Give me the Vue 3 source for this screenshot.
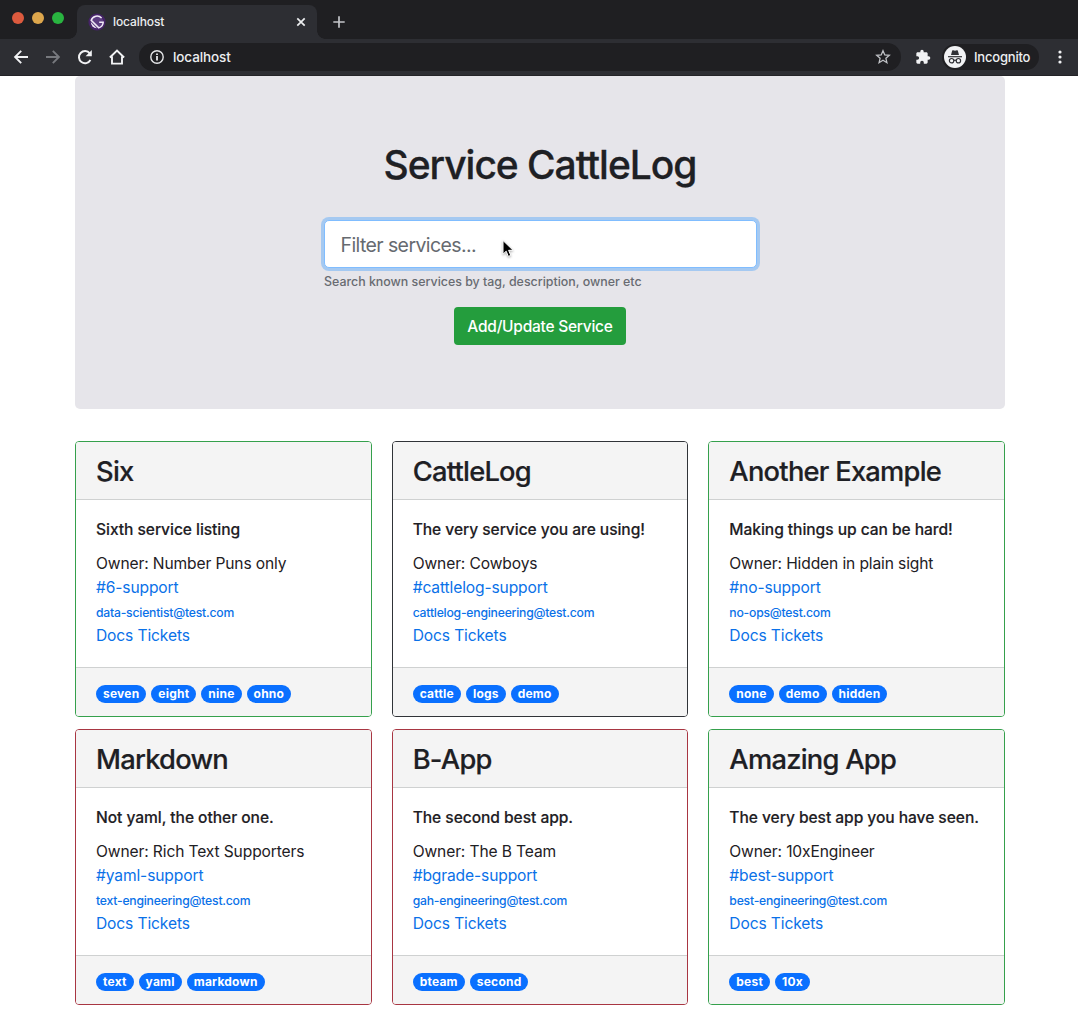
<script setup>
const services = [
  { name: 'Six', about: 'Sixth service listing', owner: 'Number Puns only', chat: '#6-support', email: 'data-scientist@test.com', tags: ['seven', 'eight', 'nine', 'ohno'], tone: 'green' },
  { name: 'CattleLog', about: 'The very service you are using!', owner: 'Cowboys', chat: '#cattlelog-support', email: 'cattlelog-engineering@test.com', tags: ['cattle', 'logs', 'demo'], tone: 'dark' },
  { name: 'Another Example', about: 'Making things up can be hard!', owner: 'Hidden in plain sight', chat: '#no-support', email: 'no-ops@test.com', tags: ['none', 'demo', 'hidden'], tone: 'green' },
  { name: 'Markdown', about: 'Not yaml, the other one.', owner: 'Rich Text Supporters', chat: '#yaml-support', email: 'text-engineering@test.com', tags: ['text', 'yaml', 'markdown'], tone: 'red' },
  { name: 'B-App', about: 'The second best app.', owner: 'The B Team', chat: '#bgrade-support', email: 'gah-engineering@test.com', tags: ['bteam', 'second'], tone: 'red' },
  { name: 'Amazing App', about: 'The very best app you have seen.', owner: '10xEngineer', chat: '#best-support', email: 'best-engineering@test.com', tags: ['best', '10x'], tone: 'green' },
]
</script>

<template>
  <div class="window">
    <header class="tabstrip">
      <div class="lights"><i class="close"></i><i class="min"></i><i class="max"></i></div>
      <div class="tab">
        <svg class="favicon" width="18" height="18" viewBox="0 0 18 18">
          <circle cx="9" cy="9" r="8.6" fill="#452367" />
          <circle cx="9" cy="9" r="6.3" fill="#5c3d80" />
          <path d="M13.6 5.1A6.2 6.2 0 0 0 3.2 7.2L10.8 14.9A6.2 6.2 0 0 0 15.2 9.3H11.2" fill="none" stroke="#efe9f5" stroke-width="1.5" />
          <path d="M2.8 9.3A6.2 6.2 0 0 0 8.7 15.2Z" fill="#efe9f5" />
        </svg>
        <span class="tab-title">localhost</span>
        <svg class="tab-close" width="10" height="10" viewBox="0 0 10 10"><path d="M1.3 1.3l7.4 7.4M8.7 1.3L1.3 8.7" stroke="#eceef0" stroke-width="1.7" /></svg>
      </div>
      <svg class="new-tab" width="12" height="12" viewBox="0 0 12 12"><path d="M6 .3v11.4M.3 6h11.4" stroke="#c3c5c9" stroke-width="1.7" /></svg>
    </header>

    <nav class="toolbar">
      <svg class="nav-icon" width="16" height="16" viewBox="0 0 16 16" fill="none" stroke="#f1f2f4" stroke-width="1.9"><path d="M15 8H2.4M8.2 1.9L2.1 8l6.1 6.1" /></svg>
      <svg class="nav-icon" width="16" height="16" viewBox="0 0 16 16" fill="none" stroke="#77797e" stroke-width="1.9"><path d="M1 8h12.6M7.8 1.9L13.9 8l-6.1 6.1" /></svg>
      <svg class="nav-icon" width="16" height="16" viewBox="0 0 16 16"><path d="M13.4 11.1A6.1 6.1 0 1 1 12.8 4.3" fill="none" stroke="#f1f2f4" stroke-width="2" /><path d="M14.8 1v6.2H8.6z" fill="#f1f2f4" /></svg>
      <svg class="nav-icon" width="16" height="16" viewBox="0 0 16 16"><path d="M.9 8.5L8 1.5l7.1 7M3 7.4v7.2h10V7.4" fill="none" stroke="#f1f2f4" stroke-width="1.9" /></svg>
      <div class="address">
        <svg width="14" height="14" viewBox="0 0 14 14"><circle cx="7" cy="7" r="6.2" fill="none" stroke="#e6e7e9" stroke-width="1.4" /><path d="M7 6.1v4.3M7 3.4v1.6" stroke="#e6e7e9" stroke-width="1.8" /></svg>
        <span class="url">localhost</span>
        <svg class="star" width="16" height="16" viewBox="0 0 16 16"><path d="M8 1.7l1.8 4.2 4.5.4-3.4 3 1 4.4L8 11.3l-3.9 2.4 1-4.4-3.4-3 4.5-.4z" fill="none" stroke="#c0c2c6" stroke-width="1.3" stroke-linejoin="miter" /></svg>
      </div>
      <svg class="puzzle" width="16" height="16" viewBox="0 0 24 24"><path fill="#f1f2f4" d="M20.5 11H19V7c0-1.100-.9-2-2-2h-4V3.500a2.500 2.500 0 0 0-5 0V5H4c-1.100 0-2 .9-2 2v3.800h1.500a2.700 2.700 0 0 1 0 5.400H2V20c0 1.100.9 2 2 2h3.800v-1.500a2.700 2.700 0 0 1 5.400 0V22H17c1.100 0 2-.9 2-2v-4h1.500a2.500 2.500 0 0 0 0-5z" /></svg>
      <div class="incognito">
        <svg width="22" height="22" viewBox="0 0 22 22">
          <circle cx="11" cy="11" r="11" fill="#f1f2f4" />
          <path d="M7 8.900L8.200 4.600Q8.500 4 9.200 4.200L11 4.700l1.800-.5q.7-.2 1 .4L15 8.900z" fill="#303136" />
          <path d="M4 10.700h14" stroke="#303136" stroke-width="1.200" />
          <g fill="none" stroke="#303136" stroke-width="1.200"><circle cx="7.600" cy="14.700" r="2.200" /><circle cx="14.400" cy="14.700" r="2.200" /><path d="M9.800 14.500q1.200-.8 2.400 0" /></g>
        </svg>
        <span>Incognito</span>
      </div>
      <svg class="menu" width="4" height="14" viewBox="0 0 4 14" fill="#f1f2f4"><circle cx="2" cy="2" r="1.600" /><circle cx="2" cy="7" r="1.600" /><circle cx="2" cy="12" r="1.600" /></svg>
    </nav>

    <main class="page">
      <section class="hero">
        <h1>Service CattleLog</h1>
        <div class="filter">
          <div class="field">
            <input type="text" placeholder="Filter services..." />
            <svg class="pointer" width="14" height="20" viewBox="0 0 14 20"><path d="M2 1.500v13.700l3.200-3 2.100 5.200 2.500-1-2.200-5.100h4.500z" fill="#000" stroke="#fff" stroke-width="1" /></svg>
          </div>
          <small>Search known services by tag, description, owner etc</small>
        </div>
        <button type="button">Add/Update Service</button>
      </section>

      <section class="cards">
        <article v-for="s in services" :key="s.name" class="card" :class="s.tone">
          <header class="card-head"><h2>{{ s.name }}</h2></header>
          <div class="card-body">
            <h3>{{ s.about }}</h3>
            <p>Owner: {{ s.owner }}</p>
            <p><a>{{ s.chat }}</a></p>
            <p class="email"><a>{{ s.email }}</a></p>
            <p><a>Docs</a> <a>Tickets</a></p>
          </div>
          <footer class="card-foot"><span v-for="t in s.tags" :key="t" class="tag">{{ t }}</span></footer>
        </article>
      </section>
    </main>
  </div>
</template>

<style>
body { margin: 0; background: #fff; }
</style>

<style scoped>
* { box-sizing: border-box; }
svg { display: block; flex: none; }
.window { height: 1020px; overflow: hidden; font-family: Inter, "Liberation Sans", sans-serif; color: #1e2024; }

.tabstrip { display: flex; height: 39px; background: #1f1f22; }
.lights { display: flex; gap: 8px; padding: 12px 0 0 12px; width: 77px; }
.lights i { width: 12px; height: 12px; border-radius: 50%; }
.close { background: #dc5a3e; }
.min { background: #dda64c; }
.max { background: #29b440; }
.tab { position: relative; display: flex; align-items: center; width: 240px; height: 34px; margin-top: 5px; padding: 0 11px; border-radius: 8px 8px 0 0; background: #2d2e33; }
.tab::before, .tab::after { content: ""; position: absolute; bottom: 0; width: 8px; height: 8px; }
.tab::before { left: -8px; background: radial-gradient(circle at 0 0, transparent 7.5px, #2d2e33 8px); }
.tab::after { right: -8px; background: radial-gradient(circle at 100% 0, transparent 7.5px, #2d2e33 8px); }
.tab-title { margin-left: 7px; padding-bottom: 2px; font-size: 12px; font-weight: 500; color: #eceef0; letter-spacing: -0.1px; }
.tab-close { margin-left: auto; }
.new-tab { margin: 16px 0 0 16px; }

.toolbar { display: flex; align-items: center; height: 37px; padding: 0 16px 0 13px; background: #2d2e33; border-bottom: 1px solid #232327; }
.nav-icon { margin-right: 16px; }
.address { display: flex; align-items: center; width: 762px; height: 28px; margin-left: -2px; padding: 0 10px 0 11px; border-radius: 14px; background: #1f1f22; }
.url { margin-left: 9px; font-size: 13.5px; font-weight: 500; color: #eceef0; letter-spacing: -0.1px; }
.star { margin-left: auto; }
.puzzle { margin-left: 14px; }
.incognito { display: flex; align-items: center; width: 97px; height: 26px; margin-left: 11px; padding-left: 2px; border-radius: 13px; background: #1f1f22; font-size: 13px; font-weight: 500; color: #eceef0; letter-spacing: -0.2px; }
.incognito span { margin-left: 8px; }
.menu { margin-left: auto; }

.page { width: 930px; margin: 0 auto 0 75px; }
.hero { display: flex; flex-direction: column; align-items: center; height: 333px; padding-top: 65px; border-radius: 5px; background: #e6e5ea; }
h1 { margin: 0; font-size: 39px; line-height: 48px; font-weight: 500; letter-spacing: -1.05px; -webkit-text-stroke: 0.3px; }
.filter { display: flex; flex-direction: column; width: 433px; margin: 31px 0 0 1px; }
.field { position: relative; }
input { display: block; width: 433px; height: 48px; padding: 2px 15.500px 0; border: 1px solid #80bdff; border-radius: 5px; outline: 0; background: #fff; box-shadow: 0 0 0 3px #a5c9f1; font: 400 19.5px Inter, "Liberation Sans", sans-serif; letter-spacing: -0.6px; }
input::placeholder { color: #666a70; opacity: 1; }
.pointer { position: absolute; left: 177px; top: 19px; filter: drop-shadow(0 1px 1px rgba(0, 0, 0, .3)); }
small { margin-top: 4px; font-size: 12.4px; font-weight: 450; line-height: 20px; color: #686b71; white-space: nowrap; }
button { width: 172px; height: 38px; margin-top: 15px; padding: 0; border: 0; border-radius: 4px; background: #249d3d; color: #fff; font: 450 15.5px Inter, "Liberation Sans", sans-serif; letter-spacing: -0.25px; white-space: nowrap; }

.cards { display: grid; grid-template-columns: repeat(3, 1fr); gap: 12px 20px; margin-top: 32px; }
.card { display: flex; flex-direction: column; height: 276px; border: 1px solid; border-radius: 4px; background: #fff; overflow: hidden; }
.green { border-color: #35a04c; }
.dark { border-color: #303338; }
.red { border-color: #a83642; }
.card-head { height: 58px; padding: 13px 20px 11px; background: #f4f4f4; border-bottom: 1px solid #cfd1d1; }
h2 { margin: 0; font-size: 27.3px; line-height: 34px; font-weight: 500; letter-spacing: -0.75px; -webkit-text-stroke: 0.2px; }
.card-body { flex: 1; padding: 20px 20px 0; font-size: 15.6px; line-height: 24px; letter-spacing: -0.13px; white-space: nowrap; }
h3 { margin: 0 0 12px; font-size: 15.6px; line-height: 20px; font-weight: 500; letter-spacing: -0.06px; -webkit-text-stroke: 0.15px; }
p { margin: 0; }
a { color: #0a71e8; }
.email { padding-top: 2px; font-size: 12.2px; font-weight: 450; line-height: 22px; letter-spacing: -0.22px; }
.card-foot { display: flex; gap: 5px; height: 49px; padding: 17px 20px 0; background: #f4f4f4; border-top: 1px solid #cfd1d1; }
.tag { height: 18px; padding: 0 7px; border-radius: 9px; background: #0a70ff; color: #fff; font-size: 12px; line-height: 17px; font-weight: 700; letter-spacing: 0.22px; }
</style>
